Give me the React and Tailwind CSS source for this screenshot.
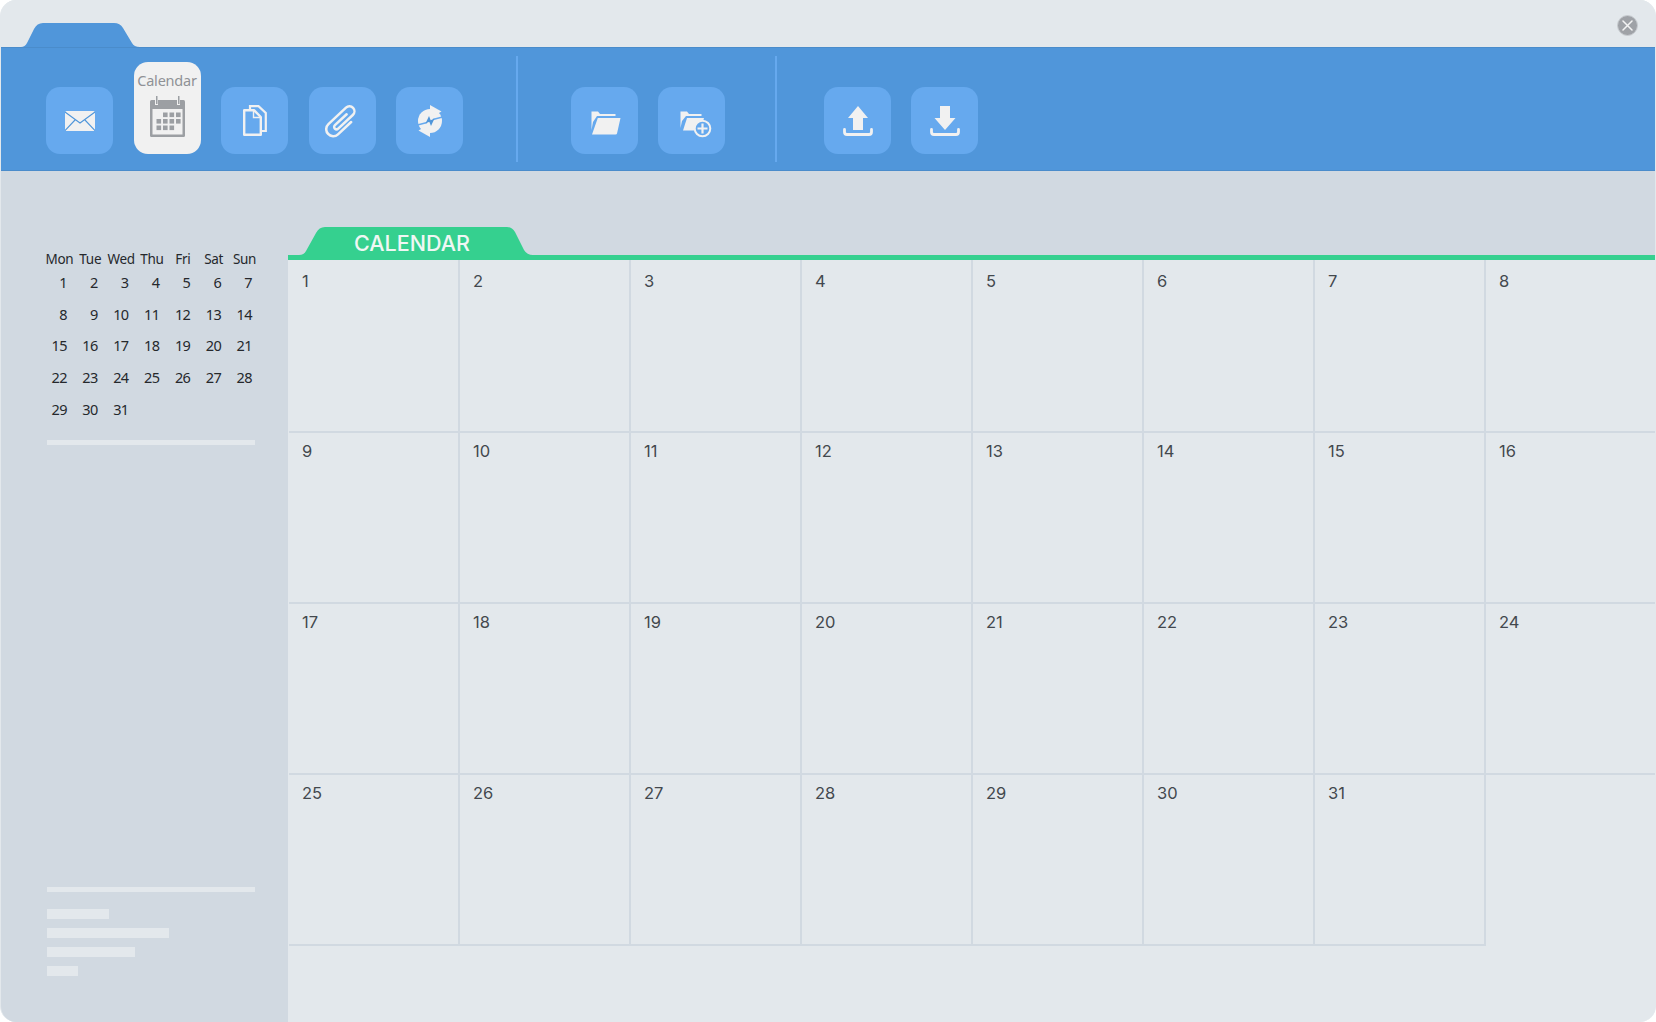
import React from "react";

const weekdays = ["Mon", "Tue", "Wed", "Thu", "Fri", "Sat", "Sun"];
const days = Array.from({ length: 31 }, (_, i) => i + 1);

const MailIcon = () => (
  <svg width="30" height="20" viewBox="0 0 30 20">
    <rect width="30" height="20" rx="1.5" fill="#f1f1f1" />
    <path d="M0 1 L15 12 L30 1 M0 19.5 L10.5 8.5 M30 19.5 L19.5 8.5" fill="none" stroke="#5096da" strokeWidth="1.1" />
  </svg>
);

const CalendarIcon = () => (
  <svg width="35" height="41" viewBox="0 0 35 41">
    <rect x="0" y="4" width="35" height="37" rx="1.5" fill="#9c9fa3" />
    <rect x="2.5" y="13" width="30" height="25.5" fill="#f1f1f1" />
    <rect x="5" y="0" width="3" height="9" fill="#f1f1f1" />
    <rect x="6" y="0" width="1.5" height="8" fill="#9c9fa3" />
    <rect x="27" y="0" width="3" height="9" fill="#f1f1f1" />
    <rect x="28" y="0" width="1.5" height="8" fill="#9c9fa3" />
    <g fill="#9c9fa3">
      {[
        [13, 16.5], [19.5, 16.5], [26, 16.5],
        [6.5, 23], [13, 23], [19.5, 23], [26, 23],
        [6.5, 29.5], [13, 29.5], [19.5, 29.5],
      ].map(([x, y]) => (
        <rect key={`${x}-${y}`} x={x} y={y} width="4.6" height="4.6" />
      ))}
    </g>
  </svg>
);

const DocsIcon = () => (
  <svg width="24" height="31" viewBox="0 0 24 31">
    <path d="M7 5 V1.2 H15.5 L22.8 8 V26 H18" fill="none" stroke="#f1f1f1" strokeWidth="2.2" />
    <path d="M1.2 5.2 H11 L17.8 12 V29.8 H1.2 Z" fill="#66a9ee" stroke="#f1f1f1" strokeWidth="2.4" strokeLinejoin="round" />
    <path d="M10.5 5.5 V12.5 H17.5" fill="none" stroke="#f1f1f1" strokeWidth="1.4" />
  </svg>
);

const ClipIcon = () => (
  <svg width="34" height="34" viewBox="-17 -17 34 34">
    <g transform="rotate(47)">
      <path
        d="M7 -6 V12 A7 7 0 0 1 -7 12 V-12 A5 5 0 0 1 3 -12 V8 A2.4 2.4 0 0 1 -1.8 8 V-8"
        fill="none"
        stroke="#f1f1f1"
        strokeWidth="2.5"
        strokeLinecap="round"
      />
    </g>
  </svg>
);

const SyncIcon = () => (
  <svg width="26" height="34" viewBox="-13 -17 26 34">
    <circle r="12" fill="#f1f1f1" />
    <path d="M0 -16 L11.5 -9.5 L0 -3 Z" fill="#f1f1f1" />
    <path d="M0 16 L-11.5 9.5 L0 3 Z" fill="#f1f1f1" />
    <path d="M12.5 -4 L3 -1.5 M-12.5 4 L-3 1.5" stroke="#66a9ee" strokeWidth="1.4" />
    <path d="M-1 -5 L-4.5 2.5 L1 0 Z M1 5 L4.5 -2.5 L-1 0 Z" fill="#5096da" />
  </svg>
);

const FolderIcon = () => (
  <svg width="30" height="24" viewBox="0 0 30 24">
    <path d="M0.5 19 V0.5 H7 L9 3 H24.5 V5 H6 L2 11 Z" fill="#f1f1f1" />
    <path d="M6.8 7 H29.5 L26 22.5 Q25.8 23.5 24.5 23.5 H1 Z" fill="#f1f1f1" />
  </svg>
);

const FolderAddIcon = () => (
  <svg width="32" height="27" viewBox="0 0 32 27">
    <path d="M0.5 17 V0.5 H7 L9 3 H21.5 V5 H6 L2 10 Z" fill="#f1f1f1" />
    <path d="M3 19.5 L7 7 H24 L22 14 L19 19.5 Z" fill="#f1f1f1" />
    <circle cx="22.5" cy="17.5" r="7.8" fill="#66a9ee" stroke="#f1f1f1" strokeWidth="2" />
    <path d="M22.5 12.5 V22.5 M17.5 17.5 H27.5" stroke="#f1f1f1" strokeWidth="2.2" />
  </svg>
);

const UploadIcon = () => (
  <svg width="30" height="30" viewBox="0 0 30 30">
    <path d="M15 0 L25 12 H20 V24 H10 V12 H5 Z" fill="#f1f1f1" />
    <path d="M1.5 23.5 V26 Q1.5 28.5 4 28.5 H26 Q28.5 28.5 28.5 26 V23.5" fill="none" stroke="#f1f1f1" strokeWidth="2.8" strokeLinecap="round" />
  </svg>
);

const DownloadIcon = () => (
  <svg width="30" height="30" viewBox="0 0 30 30">
    <path d="M10 0 H20 V12 H25.5 L15 24 L4.5 12 H10 Z" fill="#f1f1f1" />
    <path d="M1.5 23.5 V26 Q1.5 28.5 4 28.5 H26 Q28.5 28.5 28.5 26 V23.5" fill="none" stroke="#f1f1f1" strokeWidth="2.8" strokeLinecap="round" />
  </svg>
);

function ToolButton({ children }) {
  return (
    <div className="flex h-[67px] w-[67px] items-center justify-center rounded-[14px] bg-[#66a9ee]">
      {children}
    </div>
  );
}

function Toolbar() {
  return (
    <div className="flex h-[124px] items-center border-y border-y-[#4a8ccb] bg-[#5096da] pl-[45px]">
      <div className="flex items-end gap-[20.5px] self-end pb-[16px]">
        <ToolButton><MailIcon /></ToolButton>
        <div className="flex h-[92px] w-[67px] flex-col items-center rounded-[14px] bg-[#f1f1f1] pt-[8px]">
          <span className="text-[14.5px] leading-[20px] tracking-[-0.2px] text-[#8f9296] [font-family:'Noto_Sans',sans-serif]">Calendar</span>
          <div className="mt-[6px] flex"><CalendarIcon /></div>
        </div>
        <ToolButton><DocsIcon /></ToolButton>
        <ToolButton><ClipIcon /></ToolButton>
        <ToolButton><SyncIcon /></ToolButton>
      </div>
      <div className="ml-[53px] h-[106px] w-[1.5px] bg-[#66a9ee]" />
      <div className="ml-[53px] flex gap-[20.5px] self-end pb-[16px]">
        <ToolButton><div className="mt-[5px] ml-[3px] flex"><FolderIcon /></div></ToolButton>
        <ToolButton><div className="mt-[8px] ml-[8px] flex"><FolderAddIcon /></div></ToolButton>
      </div>
      <div className="ml-[50px] h-[106px] w-[1.5px] bg-[#66a9ee]" />
      <div className="ml-[47px] flex gap-[20.5px] self-end pb-[16px]">
        <ToolButton><div className="mt-[1px] ml-[2px] flex"><UploadIcon /></div></ToolButton>
        <ToolButton><div className="mt-[1px] flex"><DownloadIcon /></div></ToolButton>
      </div>
    </div>
  );
}

function TitleBar() {
  return (
    <div className="flex h-[47px] items-end justify-between bg-[#e3e8ec]">
      <svg className="ml-[20px] block" width="119" height="24" viewBox="0 0 119 24">
        <path d="M0 24 Q4 24 6 20 L13 6 Q16 0 22 0 H93 Q99 0 102 5 L111 20 Q113 24 119 24 Z" fill="#5096da" />
      </svg>
      <div className="mr-[17px] mb-[11px] flex h-[21px] w-[21px] items-center justify-center rounded-full border border-[#c8ccd0] bg-[#9fa2a7]">
        <svg width="11" height="11" viewBox="0 0 11 11">
          <path d="M1 1 L10 10 M10 1 L1 10" stroke="#f4f4f4" strokeWidth="1.5" strokeLinecap="round" />
        </svg>
      </div>
    </div>
  );
}

function MiniCalendar() {
  return (
    <div className="leading-[20px] text-[#25282c] [font-family:'Noto_Sans',sans-serif]">
      <div className="-ml-[1px] grid w-[216px] grid-cols-7 text-[13.5px]">
        {weekdays.map((d) => (
          <span key={d} className="text-center tracking-[-0.3px] whitespace-nowrap">{d}</span>
        ))}
      </div>
      <div className="mt-[3px] grid w-[216px] grid-cols-7 gap-y-[11.7px] text-[14.5px]">
        {days.map((d) => (
          <span key={d} className="pr-[9px] text-right tracking-[-0.6px]">{d}</span>
        ))}
      </div>
    </div>
  );
}

function Sidebar() {
  return (
    <div className="flex w-[287px] shrink-0 flex-col justify-between bg-[#d1d9e1] pt-[78px] pb-[46px] pl-[44px]">
      <div>
        <MiniCalendar />
        <div className="mt-[21px] ml-[2px] h-[5px] w-[208px] bg-[#e3e8ec]" />
      </div>
      <div className="ml-[2px] flex flex-col items-start">
        <div className="h-[5px] w-[208px] bg-[#e3e8ec]" />
        <div className="mt-[17px] h-[10px] w-[62px] bg-[#e3e8ec]" />
        <div className="mt-[9px] h-[10px] w-[122px] bg-[#e3e8ec]" />
        <div className="mt-[9px] h-[10px] w-[88px] bg-[#e3e8ec]" />
        <div className="mt-[9px] h-[10px] w-[31px] bg-[#e3e8ec]" />
      </div>
    </div>
  );
}

function MonthGrid() {
  return (
    <div className="ml-[1px] grid grid-cols-[repeat(8,171px)] grid-rows-[173px_repeat(3,171px)] text-[16.5px] leading-[20px] text-[#43484e] [font-family:Inter,sans-serif]">
      {days.map((d) => (
        <div
          key={d}
          className={`border-b-2 border-[#d1d9e1] pl-[13px] ${d <= 8 ? "pt-[11px]" : "pt-[8px]"} ${d % 8 === 0 ? "" : "border-r-2"}`}
        >
          {d}
        </div>
      ))}
    </div>
  );
}

export default function App() {
  return (
    <div className="flex h-[1022px] w-[1656px] flex-col overflow-hidden rounded-[16px] border-x border-[#e3e8ec] bg-[#e3e8ec]">
      <TitleBar />
      <Toolbar />
      <div className="flex flex-1 overflow-hidden">
        <Sidebar />
        <div className="flex flex-1 flex-col overflow-hidden">
          <div className="flex h-[84px] shrink-0 items-end bg-[#d1d9e1]">
            <div className="relative ml-[11px] flex h-[28px] w-[234px] items-center justify-center pt-[4px] pr-[8px] text-[21.5px] font-medium text-[#f0f7f4] [font-family:Inter,sans-serif]">
              <svg className="absolute inset-0" width="234" height="28" viewBox="0 0 234 28">
                <path d="M0 28 Q5 28 7 24 L17 6 Q20 0 26 0 H208 Q213 0 216 5 L225 23 Q228 28 234 28 Z" fill="#35d08f" />
              </svg>
              <span className="relative">CALENDAR</span>
            </div>
          </div>
          <div className="h-[5px] shrink-0 bg-[#35d08f]" />
          <MonthGrid />
        </div>
      </div>
    </div>
  );
}
